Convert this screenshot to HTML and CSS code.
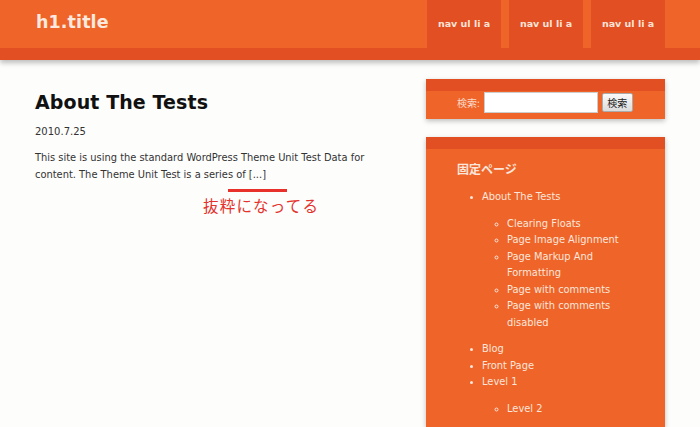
FILE: index.html
```html
<!DOCTYPE html>
<html lang="ja">
<head>
<meta charset="utf-8">
<title>h1.title</title>
<link rel="stylesheet" href="styles.css">
</head>
<body>
<header class="site-header">
  <h1 class="site-title">h1.title</h1>
  <nav class="site-nav">
    <ul class="nav-list">
      <li><a href="#">nav ul li a</a></li>
      <li><a href="#">nav ul li a</a></li>
      <li><a href="#">nav ul li a</a></li>
    </ul>
  </nav>
</header>
<div class="wrap">
  <main class="main">
    <article class="post">
      <h2 class="post-title">About The Tests</h2>
      <p class="post-date">2010.7.25</p>
      <p class="post-excerpt">This site is using the standard WordPress Theme Unit Test Data for content. The Theme Unit Test is a series of [...]</p>
      <div class="note">
        <span class="note-line"></span>
        <span class="note-text">抜粋になってる</span>
      </div>
    </article>
  </main>
  <aside class="sidebar">
    <section class="widget widget-search">
      <form class="search-form">
        <label class="search-label">検索:</label>
        <input class="search-input" type="text">
        <button class="search-btn" type="button">検索</button>
      </form>
    </section>
    <section class="widget widget-pages">
      <h3 class="widget-title">固定ページ</h3>
      <ul class="pages">
        <li>About The Tests
          <ul class="sub">
            <li>Clearing Floats</li>
            <li>Page Image Alignment</li>
            <li>Page Markup And Formatting</li>
            <li>Page with comments</li>
            <li>Page with comments disabled</li>
          </ul>
        </li>
        <li>Blog</li>
        <li>Front Page</li>
        <li>Level 1
          <ul class="sub">
            <li>Level 2</li>
          </ul>
        </li>
      </ul>
    </section>
  </aside>
</div>
</body>
</html>
```
FILE: styles.css
```css
html, body {
  margin: 0;
  padding: 0;
}
body {
  background: #fdfdfc;
  font-family: "DejaVu Sans", "Noto Sans CJK JP", sans-serif;
  color: #222;
  height: 427px;
  overflow: hidden;
}
.site-header {
  display: flex;
  align-items: stretch;
  height: 48px;
  background: #ef6429;
  border-bottom: 12px solid #e24f23;
  box-shadow: 0 3px 5px rgba(0,0,0,0.25);
  padding: 0 35px 0 36px;
}
.site-title {
  margin: 0;
  font-size: 17.5px;
  font-weight: bold;
  color: #fbe9df;
  line-height: 44px;
  letter-spacing: 0.1px;
}
.site-nav {
  margin-left: auto;
}
.nav-list {
  display: flex;
  gap: 8px;
  list-style: none;
  margin: 0;
  padding: 0;
  height: 100%;
}
.nav-list a {
  display: block;
  width: 74px;
  height: 48px;
  line-height: 47px;
  text-align: center;
  background: #e24f23;
  color: #fbe3d8;
  font-size: 9.5px;
  font-weight: bold;
  text-decoration: none;
}
.wrap {
  display: flex;
  padding: 19px 35px 0 35px;
}
.main {
  width: 358px;
}
.post-title {
  margin: 12px 0 0;
  font-size: 19px;
  line-height: 22px;
  font-weight: bold;
  color: #111;
  letter-spacing: 0.1px;
}
.post-date {
  margin: 12px 0 0;
  font-size: 10px;
  line-height: 14px;
  color: #333;
}
.post-excerpt {
  margin: 11px 0 0;
  font-size: 9.9px;
  line-height: 16.5px;
  color: #333;
}
.note {
  position: relative;
  height: 40px;
}
.note-line {
  position: absolute;
  left: 193px;
  top: 6px;
  width: 59px;
  height: 3px;
  background: #e8312a;
}
.note-text {
  position: absolute;
  left: 168px;
  top: 11px;
  font-size: 15.5px;
  color: #e3332c;
  letter-spacing: 1.2px;
  font-family: "Noto Sans CJK JP", sans-serif;
}
.sidebar {
  margin-left: auto;
  width: 239px;
  display: flex;
  flex-direction: column;
  gap: 18px;
}
.widget {
  background: #ef6429;
  border-top: 12px solid #e24f23;
  box-shadow: 0 2px 5px rgba(0,0,0,0.25);
}
.widget-search {
  height: 28px;
}
.search-form {
  display: flex;
  align-items: center;
  padding: 0 0 0 31px;
  height: 22px;
}
.search-label {
  font-size: 10px;
  color: #fbd9c8;
  margin-right: 4px;
  font-family: "Noto Sans CJK JP", sans-serif;
}
.search-input {
  width: 114px;
  height: 21px;
  box-sizing: border-box;
  border: 1px solid #ccc;
  background: #fff;
  margin: 0 4px 0 0;
  padding: 0;
}
.search-btn {
  height: 19px;
  width: 31px;
  padding: 0;
  font-size: 10px;
  font-family: "Noto Sans CJK JP", sans-serif;
  background: linear-gradient(#fafafa, #dcdcdc);
  border: 1px solid #aaa;
  border-radius: 2px;
  color: #222;
}
.widget-pages {
  height: 278px;
  padding: 0 20px 0 31px;
  color: #fbe6db;
}
.widget-title {
  margin: 12px 0 0;
  font-size: 12px;
  line-height: 16px;
  font-weight: bold;
  font-family: "Noto Sans CJK JP", sans-serif;
  color: #fbe6db;
}
.pages {
  margin: 12px 0 0;
  padding-left: 25px;
  list-style: disc;
  font-size: 9.9px;
  line-height: 16.5px;
}
.pages .sub {
  list-style: circle;
  margin: 10px 0 10px;
  padding-left: 25px;
}
.pages li::marker {
  font-size: 9px;
}
```
